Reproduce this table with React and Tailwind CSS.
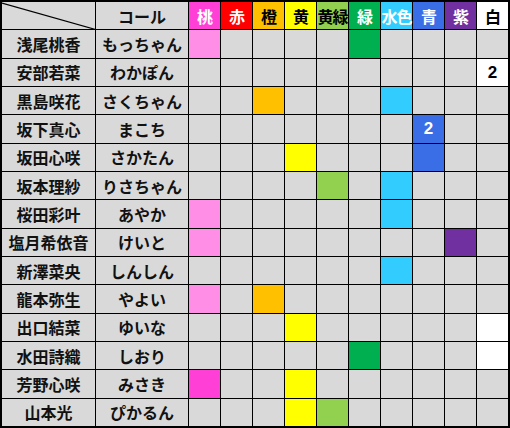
import React from "react";

const HEAD = [
  { t: "桃", bg: "bg-[#ff3fd6]", fg: "text-white" },
  { t: "赤", bg: "bg-[#ff0000]", fg: "text-white" },
  { t: "橙", bg: "bg-[#ffc000]", fg: "text-black" },
  { t: "黄", bg: "bg-[#ffff00]", fg: "text-black" },
  { t: "黄緑", bg: "bg-[#92d050]", fg: "text-black" },
  { t: "緑", bg: "bg-[#00b050]", fg: "text-white" },
  { t: "水色", bg: "bg-[#33ccff]", fg: "text-white" },
  { t: "青", bg: "bg-[#3a6ee6]", fg: "text-white" },
  { t: "紫", bg: "bg-[#7030a0]", fg: "text-white" },
  { t: "白", bg: "bg-white", fg: "text-black" },
];

const FILL = {
  p: "bg-[#ff8ee6]",
  P: "bg-[#ff3fd6]",
  o: "bg-[#ffc000]",
  y: "bg-[#ffff00]",
  l: "bg-[#92d050]",
  g: "bg-[#00b050]",
  c: "bg-[#33ccff]",
  b: "bg-[#3a6ee6]",
  v: "bg-[#7030a0]",
  w: "bg-white",
};

const ROWS = [
  ["浅尾桃香", "もっちゃん", { 0: "p", 5: "g" }],
  ["安部若菜", "わかぽん", { 9: "w" }, { 9: "2" }],
  ["黒島咲花", "さくちゃん", { 2: "o", 6: "c" }],
  ["坂下真心", "まこち", { 7: "b" }, { 7: "2" }],
  ["坂田心咲", "さかたん", { 3: "y", 7: "b" }],
  ["坂本理紗", "りさちゃん", { 4: "l", 6: "c" }],
  ["桜田彩叶", "あやか", { 0: "p", 6: "c" }],
  ["塩月希依音", "けいと", { 0: "p", 8: "v" }],
  ["新澤菜央", "しんしん", { 6: "c" }],
  ["龍本弥生", "やよい", { 0: "p", 2: "o" }],
  ["出口結菜", "ゆいな", { 3: "y", 9: "w" }],
  ["水田詩織", "しおり", { 5: "g", 9: "w" }],
  ["芳野心咲", "みさき", { 0: "P", 3: "y" }],
  ["山本光", "ぴかるん", { 3: "y", 4: "l" }],
];

export default function App() {
  return (
    <div
      className="w-[510px] h-[428px] bg-black p-[2px] grid grid-cols-[93px_92px_repeat(10,31px)] grid-rows-[repeat(15,1fr)] gap-px text-[16px] font-bold text-[#111]"
      style={{ fontFamily: '"Noto Sans CJK JP", "Noto Sans", sans-serif' }}
    >
      <div className="bg-[#d9d9d9] relative">
        <svg className="absolute inset-0 w-full h-full" viewBox="0 0 93 27" preserveAspectRatio="none">
          <line x1="0" y1="1" x2="93" y2="27" stroke="#000" strokeWidth="1.2" />
        </svg>
      </div>
      <div className="bg-[#d9d9d9] flex items-center justify-center leading-none">コール</div>
      {HEAD.map((h) => (
        <div
          key={h.t}
          className={`${h.bg} ${h.fg} flex items-center justify-center leading-none whitespace-nowrap tracking-[-1px]`}
        >
          {h.t}
        </div>
      ))}
      {ROWS.map(([name, call, fills, nums = {}]) => (
        <React.Fragment key={name}>
          <div className="bg-[#d9d9d9] flex items-center justify-center leading-none whitespace-nowrap">{name}</div>
          <div className="bg-[#d9d9d9] flex items-center justify-center leading-none whitespace-nowrap">{call}</div>
          {HEAD.map((h, i) => (
            <div
              key={i}
              className={`${fills[i] ? FILL[fills[i]] : "bg-[#d9d9d9]"} ${
                fills[i] === "b" ? "text-white" : "text-black"
              } flex items-center justify-center leading-none text-[17px]`}
              style={{ fontFamily: '"Liberation Sans", Arial, sans-serif' }}
            >
              {nums[i] || ""}
            </div>
          ))}
        </React.Fragment>
      ))}
    </div>
  );
}
